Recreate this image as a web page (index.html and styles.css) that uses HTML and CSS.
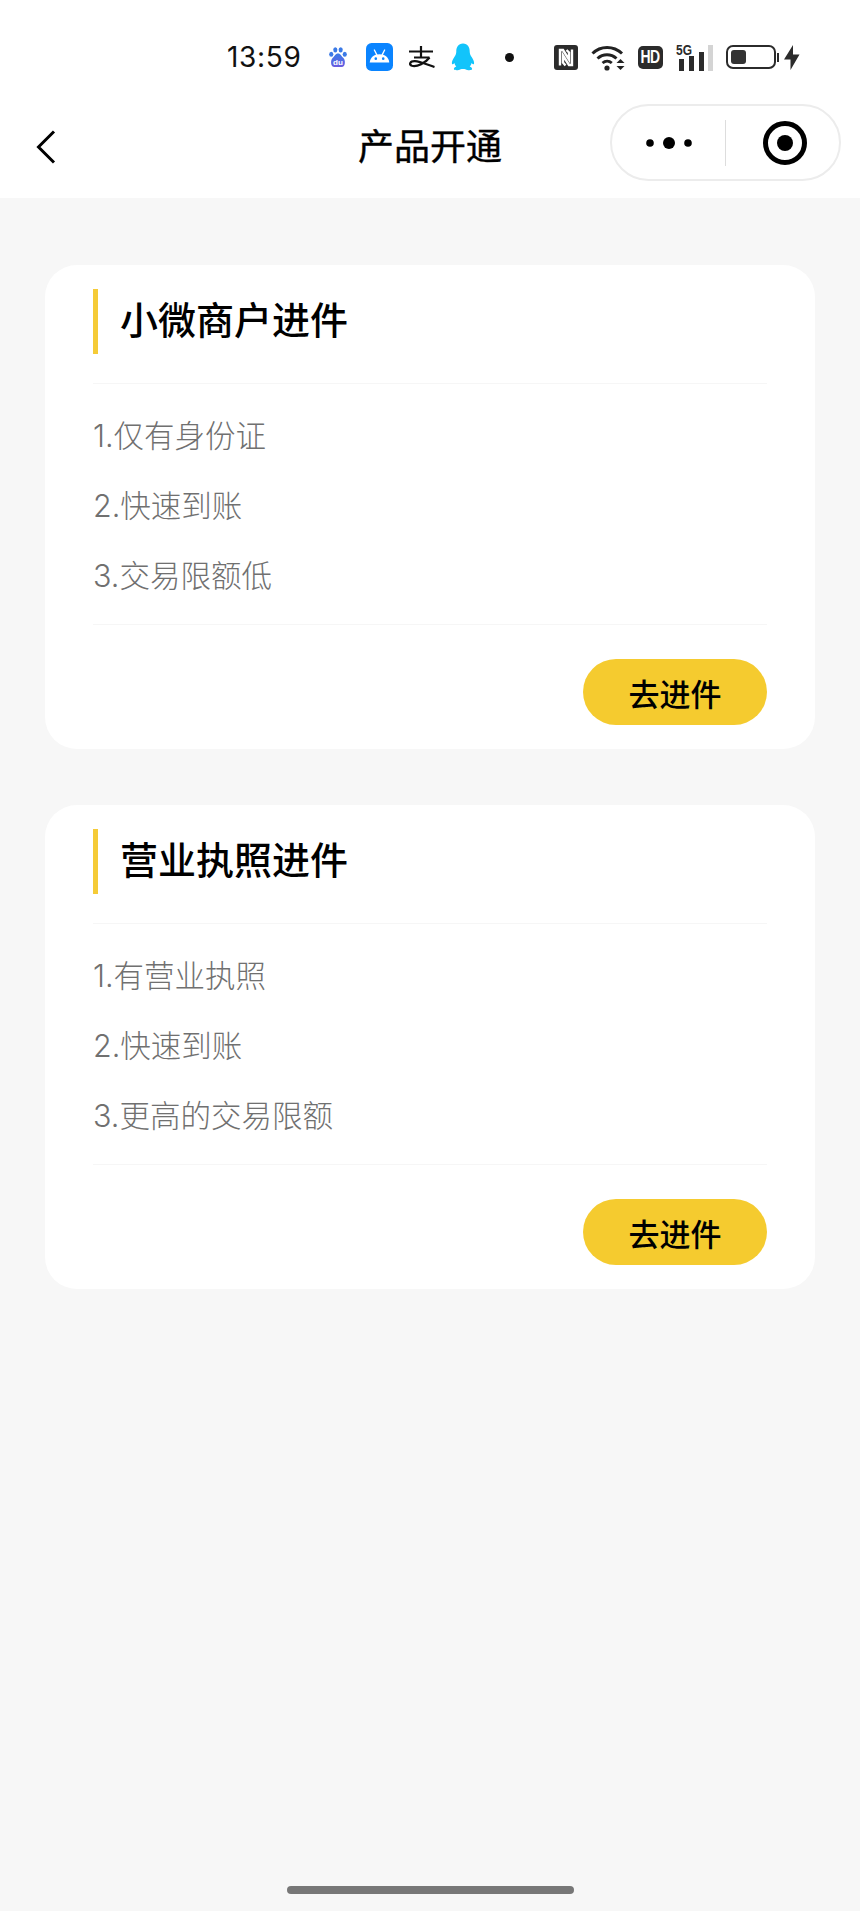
FILE: index.html
```html
<!DOCTYPE html>
<html lang="zh-CN">
<head>
    <meta charset="UTF-8">
    <meta name="viewport" content="width=device-width, initial-scale=1.0">
    <title>产品开通</title>
    <link rel="stylesheet" href="styles.css">
</head>
<body>
    <header class="top">
        <!-- 状态栏 -->
        <div class="status-bar">
            <span class="time">13:59</span>
            <div class="notify-icons">
                <svg class="icon-baidu" width="18" height="21" viewBox="0 0 20 23">
                    <defs>
                        <linearGradient id="duFill" x1="0" y1="0" x2="0" y2="1">
                            <stop offset="0" stop-color="#3a7be8"/>
                            <stop offset="1" stop-color="#6a5ce0"/>
                        </linearGradient>
                    </defs>
                    <ellipse cx="2.500" cy="8" rx="2.300" ry="2.800" fill="#3b7ae6"/>
                    <ellipse cx="7" cy="3" rx="2.300" ry="3" fill="#3b7ae6"/>
                    <ellipse cx="13" cy="3" rx="2.300" ry="3" fill="#3b7ae6"/>
                    <ellipse cx="17.500" cy="8" rx="2.300" ry="2.800" fill="#3b7ae6"/>
                    <path d="M10 7c3 0 3.500 3 6 5 2.500 2.500 2.500 10-2 10H6c-4.500 0-4.500-7.500-2-10 2.500-2 3-5 6-5z" fill="url(#duFill)"/>
                    <text x="10" y="20" class="du-text">du</text>
                </svg>
                <svg width="27" height="28" viewBox="0 0 29 30">
                    <rect width="29" height="30" rx="6" fill="#0a84ff"/>
                    <path d="M4 21c.4-5.500 4.500-9 10.500-9s10.100 3.500 10.500 9z" fill="#fff"/>
                    <path d="M9 7.500l2.800 5.500M20 7.500l-2.800 5.500" stroke="#fff" stroke-width="1.400" stroke-linecap="round"/>
                    <circle cx="10.500" cy="16.800" r="1.400" fill="#0a84ff"/>
                    <circle cx="18.500" cy="16.800" r="1.400" fill="#0a84ff"/>
                </svg>
                <svg width="26" height="22" viewBox="0 0 26 22">
                    <path d="M0 5.500H24M12 0V11.500M5 11.500H20.500" fill="none" stroke="#111" stroke-width="2.200"/>
                    <path d="M20.500 11.500C16.500 17 8 21 3 19.800 -.5 18.800 1 15 6 15.200 11 15.500 19 19 25.500 21" fill="none" stroke="#111" stroke-width="2.200"/>
                </svg>
                <svg width="24" height="28" viewBox="0 0 25 28">
                    <path d="M12.500 0c5 0 7 4 7 8.500 0 2 .8 3.500 2 5.500 1.500 2.500 3 5 2.500 7-.4 1-1.500.5-2.500-.8-.3 1.500-1 2.800-2 3.800 1.500.6 2.500 1.500 2.500 2.500 0 1.200-3 1.500-5 1-1.500-.4-2.500-1-4.500-1s-3 .6-4.500 1c-2 .5-5 .2-5-1 0-1 1-1.900 2.500-2.500-1-1-1.700-2.300-2-3.800-1 1.300-2.100 1.800-2.500.8-.5-2 1-4.500 2.500-7 1.200-2 2-3.500 2-5.500C5.500 4 7.500 0 12.500 0z" fill="#12c4fb"/>
                </svg>
                <span class="dot"></span>
            </div>
            <div class="system-icons">
                <svg width="24" height="25" viewBox="0 0 24 25">
                    <rect width="24" height="25" rx="3" fill="#2b2b2b"/>
                    <path d="M6 20.500V5h3l6 9.500V7.500L12.500 5M18 4.500V20h-3L9 10.500V17.500l2.500 3" fill="none" stroke="#fff" stroke-width="2.400"/>
                </svg>
                <svg width="36" height="27" viewBox="0 0 36 27">
                    <path d="M1.500 9.500C9.500 1.500 22.500 1.500 31 9.500" fill="none" stroke="#222" stroke-width="3"/>
                    <path d="M6.500 14.500c5.500-5 13.500-5 19 0" fill="none" stroke="#222" stroke-width="3"/>
                    <path d="M11.500 19c2.800-2.500 6.500-2.500 9.300 0" fill="none" stroke="#222" stroke-width="2.800"/>
                    <circle cx="16" cy="24" r="2.600" fill="#222"/>
                    <path d="M25.500 19l4-4 4 4zM25.500 22h8l-4 4z" fill="#222"/>
                </svg>
                <svg class="hd-badge" width="25" height="23" viewBox="0 0 25 23">
                    <rect width="25" height="23" rx="5" fill="#2b2b2b"/>
                    <text x="2.500" y="17.500" class="hd-text" transform="matrix(1 0 0 1.250 0 -4.400)">HD</text>
                </svg>
                <svg width="37" height="37" viewBox="0 -5 37 37">
                    <text x="0" y="11.500" class="net-text" transform="matrix(1 0 0 1.250 0 -2.900)">5G</text>
                    <rect x="3" y="15" width="5" height="12" fill="#2b2b2b"/>
                    <rect x="13" y="12" width="5" height="15" fill="#2b2b2b"/>
                    <rect x="23" y="8" width="5" height="19" fill="#2b2b2b"/>
                    <rect x="32" y="1" width="5" height="26" fill="#d4d4d4"/>
                </svg>
                <div class="battery">
                    <div class="battery-body"><span class="battery-level"></span></div>
                    <span class="battery-cap"></span>
                </div>
                <svg class="bolt" width="16" height="25" viewBox="0 0 16 25">
                    <path d="M9 0v9.500h6.500L6.500 25v-10.500H0z" fill="#2b2b2b"/>
                </svg>
            </div>
        </div>

        <!-- 导航栏 -->
        <nav class="nav-bar">
            <svg class="back" width="20" height="34" viewBox="0 0 20 34">
                <path d="M18 1.500L2.500 17 18 32.500" fill="none" stroke="#000" stroke-width="3"/>
            </svg>
            <h1 class="nav-title">产品开通</h1>
            <div class="capsule">
                <div class="capsule-cell">
                    <svg width="46" height="14" viewBox="0 0 46 14">
                        <circle cx="4" cy="7" r="3.800" fill="#000"/>
                        <circle cx="23" cy="7" r="6" fill="#000"/>
                        <circle cx="42" cy="7" r="3.800" fill="#000"/>
                    </svg>
                </div>
                <span class="capsule-line"></span>
                <div class="capsule-cell capsule-target">
                    <svg width="44" height="44" viewBox="0 0 44 44">
                        <circle cx="22" cy="22" r="19.500" fill="none" stroke="#000" stroke-width="5"/>
                        <circle cx="22" cy="22" r="8" fill="#000"/>
                    </svg>
                </div>
            </div>
        </nav>
    </header>

    <main class="container">
        <section class="card">
            <h2 class="card-title">小微商户进件</h2>
            <ul class="card-list">
                <li>1.仅有身份证</li>
                <li>2.快速到账</li>
                <li>3.交易限额低</li>
            </ul>
            <div class="card-footer">
                <button class="go-btn">去进件</button>
            </div>
        </section>

        <section class="card">
            <h2 class="card-title">营业执照进件</h2>
            <ul class="card-list">
                <li>1.有营业执照</li>
                <li>2.快速到账</li>
                <li>3.更高的交易限额</li>
            </ul>
            <div class="card-footer">
                <button class="go-btn">去进件</button>
            </div>
        </section>
    </main>

    <div class="home-bar"><span class="home-indicator"></span></div>
</body>
</html>
```

FILE: styles.css
```css
* {
    box-sizing: border-box;
}
body {
    margin: 0;
    height: 1911px;
    display: flex;
    flex-direction: column;
    background-color: #f7f7f7;
    color: #000;
    font-family: Inter, "Noto Sans CJK SC", sans-serif;
}
.top {
    background-color: #fff;
    height: 198px;
}

/* 状态栏 */
.status-bar {
    height: 76px;
    margin-top: 19px;
    padding-left: 227px;
    display: flex;
    align-items: center;
}
.time {
    width: 102px;
    font-size: 28px;
    letter-spacing: 0.7px;
    color: #111;
}
.notify-icons {
    width: 225px;
    display: flex;
    align-items: center;
    gap: 16px;
}
.icon-baidu {
    margin-right: 3px;
}
.du-text {
    font-family: "Liberation Sans", sans-serif;
    font-size: 9px;
    font-weight: bold;
    fill: #fff;
    text-anchor: middle;
}
.dot {
    width: 9px;
    height: 9px;
    margin-left: 14px;
    border-radius: 50%;
    background-color: #111;
}
.system-icons {
    display: flex;
    align-items: center;
    gap: 13px;
}
.hd-badge {
    margin-left: -2px;
}
.hd-text {
    font-family: "Liberation Sans", sans-serif;
    font-size: 14px;
    font-weight: bold;
    letter-spacing: -0.5px;
    fill: #fff;
}
.net-text {
    font-family: "Liberation Sans", sans-serif;
    font-size: 12px;
    font-weight: bold;
    fill: #2b2b2b;
}
.battery {
    display: flex;
    align-items: center;
    gap: 1px;
}
.battery-body {
    width: 50px;
    height: 24px;
    padding: 3px;
    border: 2px solid #2b2b2b;
    border-radius: 7px;
}
.battery-level {
    display: block;
    width: 15px;
    height: 100%;
    border-radius: 3px;
    background-color: #333;
}
.battery-cap {
    width: 2px;
    height: 9px;
    background-color: #2b2b2b;
}
.bolt {
    margin-left: -8px;
}

/* 导航栏 */
.nav-bar {
    height: 103px;
    display: grid;
    grid-template-columns: 1fr auto 1fr;
    align-items: center;
}
.back {
    margin-left: 36px;
}
.nav-title {
    margin: 0;
    font-size: 36px;
    font-weight: 400;
    line-height: 1;
    -webkit-text-stroke: 0.4px #000;
}
.capsule {
    justify-self: end;
    width: 231px;
    height: 77px;
    margin: 0 19px 8px 0;
    display: flex;
    align-items: center;
    border: 2px solid #ececec;
    border-radius: 39px;
}
.capsule-cell {
    flex: 1;
    display: flex;
    justify-content: center;
}
.capsule-target svg {
    margin-left: 5px;
}
.capsule-line {
    width: 1px;
    height: 46px;
    background-color: #ddd;
}

/* 卡片 */
.container {
    flex: 1;
    padding: 67px 45px 0;
    display: flex;
    flex-direction: column;
    gap: 56px;
}
.card {
    height: 484px;
    padding: 24px 48px;
    background-color: #fff;
    border-radius: 32px;
}
.card-title {
    height: 65px;
    margin: 0 0 29px;
    padding-left: 22px;
    border-left: 5px solid #f5cb37;
    font-size: 38px;
    font-weight: 500;
    line-height: 62px;
}
.card-list {
    margin: 0;
    padding: 17px 0 13px;
    list-style: none;
    border-top: 1px solid #f6f6f6;
    border-bottom: 1px solid #f6f6f6;
    color: #707070;
    font-size: 30.5px;
    font-weight: 300;
}
.card-list li {
    height: 70px;
    line-height: 70px;
}
.card-footer {
    padding-top: 34px;
    display: flex;
    justify-content: flex-end;
}
.go-btn {
    width: 184px;
    height: 66px;
    padding: 0;
    border: none;
    border-radius: 33px;
    background-color: #f5cb2f;
    color: #000;
    font-family: inherit;
    font-size: 31px;
    font-weight: 500;
    cursor: pointer;
}

.home-bar {
    height: 25px;
    display: flex;
    justify-content: center;
}
.home-indicator {
    width: 287px;
    height: 8px;
    border-radius: 4px;
    background-color: #777;
}
```
